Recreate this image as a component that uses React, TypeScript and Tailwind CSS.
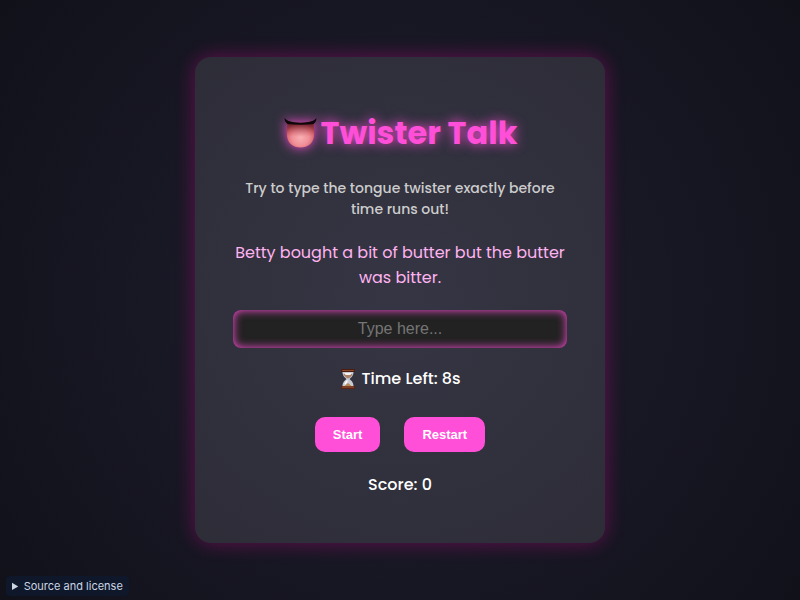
import React, { useEffect, useState } from 'react';

const TWISTERS = [
  'Betty bought a bit of butter but the butter was bitter.',
  'She sells seashells by the seashore.',
  'Fresh fried fish, fish fresh fried.',
];

const ROUND_SECONDS = 8;

const TongueIcon: React.FC = () => (
  <svg
    className="h-9 w-9 shrink-0 drop-shadow-[0_0_6px_#ff4fd8]"
    viewBox="0 0 36 36"
    aria-hidden="true"
  >
    <defs>
      <radialGradient id="tongue" cx="50%" cy="62%" r="56%">
        <stop offset="0" stopColor="#f9b0b3" />
        <stop offset="0.55" stopColor="#f09099" />
        <stop offset="0.85" stopColor="#dc6a72" />
        <stop offset="1" stopColor="#b5505b" />
      </radialGradient>
      <linearGradient id="tongueShade" x1="0" y1="0" x2="0" y2="1">
        <stop offset="0" stopColor="#140408" />
        <stop offset="0.14" stopColor="#5e1622" stopOpacity="0.75" />
        <stop offset="0.6" stopColor="#c04c56" stopOpacity="0" />
      </linearGradient>
    </defs>
    <path d="M5 6Q18 10 30 6C31 10 31.500 15 31 21C30 28.500 25 32.500 17.500 32.500S5 28.500 4 21C3.500 15 4 10 5 6Z" fill="url(#tongue)" />
    <path d="M5 6Q18 10 30 6C31 10 31.500 15 31 21C30 28.500 25 32.500 17.500 32.500S5 28.500 4 21C3.500 15 4 10 5 6Z" fill="url(#tongueShade)" />
    <path d="M1.500 3C3 5 5 6 8 6.800Q17.500 8.800 27 6.800C30 6 32 5 33.500 3C33.500 5.500 32.500 7.500 30.500 9Q17.500 10.500 4.500 9C2.500 7.500 1.500 5.500 1.500 3Z" fill="#0d0709" />
  </svg>
);

const HourglassIcon: React.FC = () => (
  <svg className="h-5 w-4 shrink-0" viewBox="0 0 16 20" aria-hidden="true">
    <path d="M2.500 3H13.500C13.500 7 11 8.500 9.500 10C11 11.500 13.500 13 13.500 17H2.500C2.500 13 5 11.500 6.500 10C5 8.500 2.500 7 2.500 3Z" fill="#c9cbd4" />
    <path d="M3.500 5H12.500C12 7 10 8.500 8 9.500C6 8.500 4 7 3.500 5Z" fill="#a98169" />
    <path d="M4.500 4H11.500L10.500 6H5.500Z" fill="#f5f3f3" />
    <path d="M4.500 14L7.500 10.500V13L5 16Z" fill="#ffffff" />
    <path d="M8 14L11.500 17H4.500Z" fill="#b58a52" />
    <rect x="1" y="0" width="14" height="3" rx="0.800" fill="#4a1d10" />
    <rect x="2" y="1" width="12" height="1" rx="0.500" fill="#8d4a2e" />
    <rect x="1" y="17" width="14" height="3" rx="0.800" fill="#5b2413" />
    <rect x="2" y="17.500" width="12" height="1" rx="0.500" fill="#a05a38" />
  </svg>
);

const App: React.FC = () => {
  const [index, setIndex] = useState(0);
  const [typed, setTyped] = useState('');
  const [timeLeft, setTimeLeft] = useState(ROUND_SECONDS);
  const [score, setScore] = useState(0);
  const [running, setRunning] = useState(false);

  // Tick once a second while a round is active
  useEffect(() => {
    if (!running) return;
    if (timeLeft === 0) {
      setRunning(false);
      return;
    }
    const timer = setTimeout(() => setTimeLeft(timeLeft - 1), 1000);
    return () => clearTimeout(timer);
  }, [running, timeLeft]);

  const handleStart = () => {
    setTyped('');
    setTimeLeft(ROUND_SECONDS);
    setRunning(true);
  };

  const handleRestart = () => {
    setIndex(0);
    setScore(0);
    setTyped('');
    setTimeLeft(ROUND_SECONDS);
    setRunning(false);
  };

  const handleType = (value: string) => {
    setTyped(value);
    if (running && value === TWISTERS[index]) {
      setScore(score + 1);
      setIndex((index + 1) % TWISTERS.length);
      setTyped('');
      setTimeLeft(ROUND_SECONDS);
    }
  };

  return (
    <div className="flex min-h-screen items-center justify-center bg-[radial-gradient(circle,#1f1e2f,#11111a)] font-[Poppins,Inter,sans-serif] text-white">
      <main className="w-full max-w-[410px] rounded-2xl bg-white/10 px-[38px] pt-[52px] pb-[46px] text-center shadow-[0_0_20px_#ff00aa55]">
        <h1 className="flex items-center justify-center gap-0.5 text-[32px] leading-12 font-bold text-[#ff4fd8] [text-shadow:0_0_12px_#ff4fd8]">
          <TongueIcon />
          Twister Talk
        </h1>

        <p className="mt-[21px] px-2 text-[14px] leading-[21px] font-medium text-[#cccccc]">
          Try to type the tongue twister exactly before time runs out!
        </p>

        <p className="mt-5 text-base leading-[25px] text-[#ffb3f0]">{TWISTERS[index]}</p>

        <input
          type="text"
          aria-label="Type the tongue twister"
          placeholder="Type here..."
          value={typed}
          onChange={(e) => handleType(e.target.value)}
          className="mt-5 h-[38px] w-full rounded-lg bg-[#222222] px-3 text-center font-['Liberation_Sans',sans-serif] text-base shadow-[inset_0_0_10px_#ff4fd8] outline-none placeholder:text-[#757575]"
        />

        <div className="mt-[19px] flex items-center justify-center gap-1.5 text-base leading-6 font-medium">
          <HourglassIcon />
          <span>Time Left: {timeLeft}s</span>
        </div>

        <div className="mt-[26px] flex justify-center gap-6 font-['Liberation_Sans',sans-serif] text-[13px] font-bold">
          <button onClick={handleStart} className="h-[35px] rounded-[10px] bg-[#ff4fd8] px-[18px] hover:bg-[#ff2fcf]">
            Start
          </button>
          <button onClick={handleRestart} className="h-[35px] rounded-[10px] bg-[#ff4fd8] px-[18px] hover:bg-[#ff2fcf]">
            Restart
          </button>
        </div>

        <p className="mt-[21px] text-base font-medium">Score: {score}</p>
      </main>

      <details className="fixed bottom-1 left-1.5 rounded bg-[#0f172a] px-1.5 font-[Inter,sans-serif] text-[11px] leading-5 text-[#cbd5e1]">
        <summary className="cursor-pointer">Source and license</summary>
      </details>
    </div>
  );
};

export default App;
